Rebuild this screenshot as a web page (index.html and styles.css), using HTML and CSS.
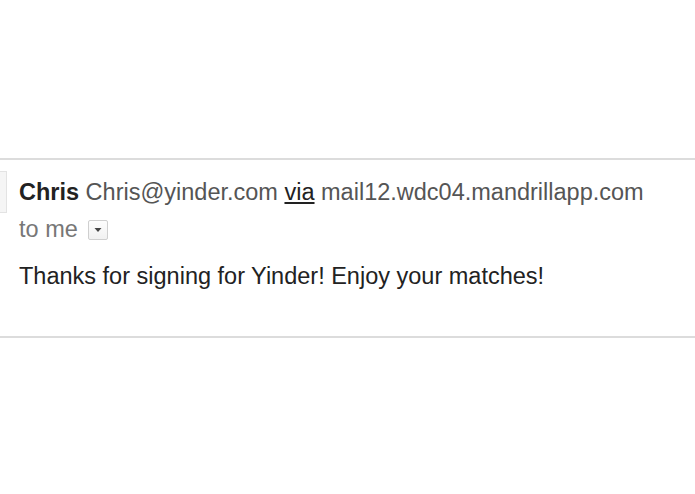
FILE: index.html
```html
<!DOCTYPE html>
<html>
<head>
<meta charset="utf-8">
<link rel="stylesheet" href="styles.css">
</head>
<body>
<div class="message">
  <div class="tab"></div>
  <div class="content">
    <div class="from"><b class="name">Chris</b> <span class="addr">Chris@yinder.com</span> <a class="via">via</a> <span class="addr">mail12.wdc04.mandrillapp.com</span></div>
    <div class="to">to me <span class="dd"><svg width="10" height="6" viewBox="0 0 10 6"><path d="M1.5 1h7L5 5z" fill="#444"/></svg></span></div>
    <div class="body">Thanks for signing for Yinder! Enjoy your matches!</div>
  </div>
</div>
</body>
</html>
```
FILE: styles.css
```css
html, body { margin: 0; padding: 0; background: #fff; }
body { font-family: "Liberation Sans", Arial, sans-serif; }
.message {
  margin-top: 158px;
  border-top: 2px solid #dcdcdc;
  border-bottom: 2px solid #dcdcdc;
  height: 176px;
  display: flex;
  align-items: flex-start;
}
.tab {
  width: 6px;
  height: 40px;
  margin-top: 11px;
  background: #f5f5f5;
  border: 1px solid #e3e3e3;
  border-left: none;
  flex: none;
}
.content { padding-left: 12px; padding-top: 18px; }
.from { font-size: 23.5px; line-height: 28px; color: #555; white-space: nowrap; }
.name { color: #222; }
.via { color: #222; text-decoration: underline; }
.to { font-size: 23.5px; line-height: 28px; color: #777; margin-top: 9px; display: flex; align-items: center; }
.dd {
  display: inline-flex; align-items: center; justify-content: center;
  width: 18px; height: 18px; margin-left: 10px; margin-top: 1px;
  border: 1px solid #cfcfcf; border-radius: 2px;
  background: linear-gradient(#fdfdfd, #f1f1f1);
}
.body { font-size: 23.5px; line-height: 28px; color: #222; margin-top: 19px; }
```
